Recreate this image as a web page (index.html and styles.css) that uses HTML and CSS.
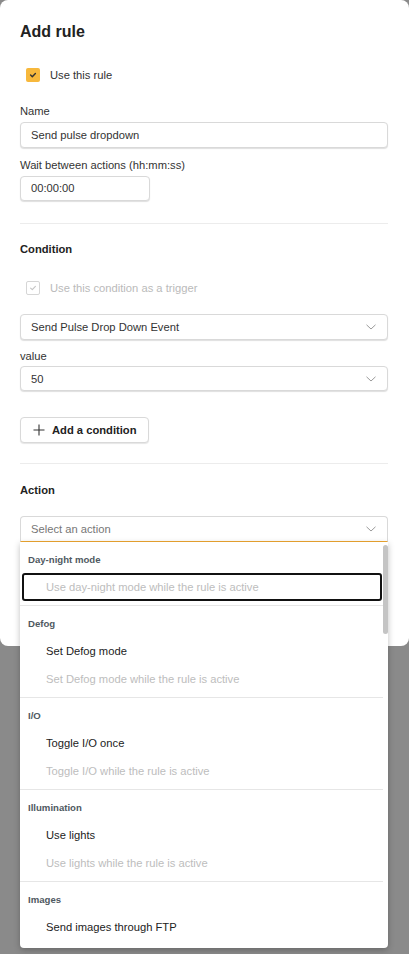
FILE: index.html
```html
<!DOCTYPE html>
<html lang="en">
<head>
<meta charset="utf-8">
<title>Add rule</title>
<link rel="stylesheet" href="styles.css">
</head>
<body>
<div class="dialog">
  <h1 class="title">Add rule</h1>

  <label class="check check-rule">
    <span class="box box-on"><svg viewBox="0 0 14 14" width="14" height="14"><path d="M4.6 7.1 L6.3 8.7 L9.4 5.4" fill="none" stroke="#333" stroke-width="1.4" stroke-linecap="round" stroke-linejoin="round"/></svg></span>
    <span class="check-label">Use this rule</span>
  </label>

  <div class="field field-name">
    <div class="label">Name</div>
    <div class="input">Send pulse dropdown</div>
  </div>
  <div class="field field-wait">
    <div class="label">Wait between actions (hh:mm:ss)</div>
    <div class="input input-short">00:00:00</div>
  </div>

  <hr class="divider">

  <h2 class="section section-condition">Condition</h2>

  <label class="check check-disabled">
    <span class="box box-off"><svg viewBox="0 0 14 14" width="14" height="14"><path d="M4.6 7.1 L6.3 8.7 L9.4 5.4" fill="none" stroke="#c4c4c4" stroke-width="1.1" stroke-linecap="round" stroke-linejoin="round"/></svg></span>
    <span class="check-label">Use this condition as a trigger</span>
  </label>

  <div class="select select-event">
    <span>Send Pulse Drop Down Event</span>
    <svg class="chev" viewBox="0 0 10 6" width="10" height="6"><path d="M0.5 0.8 L5 5 L9.5 0.8" fill="none" stroke="#9a9a9a" stroke-width="1"/></svg>
  </div>
  <div class="field field-value">
    <div class="label label-value">value</div>
    <div class="select">
      <span>50</span>
      <svg class="chev" viewBox="0 0 10 6" width="10" height="6"><path d="M0.5 0.8 L5 5 L9.5 0.8" fill="none" stroke="#9a9a9a" stroke-width="1"/></svg>
    </div>
  </div>

  <button class="btn" type="button">
    <svg viewBox="0 0 12 12" width="12" height="12"><path d="M6 0.5 V11.5 M0.5 6 H11.5" stroke="#333" stroke-width="1.1" fill="none"/></svg>
    <span>Add a condition</span>
  </button>

  <hr class="divider divider-action">

  <h2 class="section">Action</h2>

  <div class="combo">
    <div class="select select-open">
      <span class="placeholder">Select an action</span>
      <svg class="chev" viewBox="0 0 10 6" width="10" height="6"><path d="M0.5 0.8 L5 5 L9.5 0.8" fill="none" stroke="#9a9a9a" stroke-width="1"/></svg>
    </div>
    <div class="menu">
      <div class="menu-list">
        <div class="group">
          <div class="group-head">Day-night mode</div>
          <div class="item item-disabled item-focus">Use day-night mode while the rule is active</div>
        </div>
        <div class="group">
          <div class="group-head">Defog</div>
          <div class="item">Set Defog mode</div>
          <div class="item item-disabled">Set Defog mode while the rule is active</div>
        </div>
        <div class="group">
          <div class="group-head">I/O</div>
          <div class="item">Toggle I/O once</div>
          <div class="item item-disabled">Toggle I/O while the rule is active</div>
        </div>
        <div class="group">
          <div class="group-head">Illumination</div>
          <div class="item">Use lights</div>
          <div class="item item-disabled">Use lights while the rule is active</div>
        </div>
        <div class="group">
          <div class="group-head">Images</div>
          <div class="item">Send images through FTP</div>
        </div>
      </div>
      <div class="scroll-track"><div class="scroll-thumb"></div></div>
    </div>
  </div>
</div>
</body>
</html>
```
FILE: styles.css
```css
* { box-sizing: border-box; }
html, body { margin: 0; padding: 0; }
body {
  background: #8a8a8a;
  font-family: "Liberation Sans", Arial, sans-serif;
  font-size: 11.2px;
  color: #333;
  width: 409px;
  height: 954px;
  overflow: hidden;
}
.dialog {
  background: #fff;
  border-radius: 8px;
  height: 646px;
  padding: 22px 21px 0 20px;
  display: flex;
  flex-direction: column;
}
.title {
  margin: 0;
  font-size: 16px;
  font-weight: 700;
  color: #222;
  line-height: 20px;
}
.check {
  display: flex;
  align-items: center;
  gap: 10px;
  margin: 0 0 0 6px;
  height: 14px;
  flex: none;
}
.check-rule { margin-top: 26px; }
.box {
  width: 14px;
  height: 14px;
  border-radius: 2px;
  display: flex;
  flex: none;
}
.box-on { background: #f7b83c; }
.box-off { border: 1px solid #d6d6d6; background: #fff; }
.box-off svg { margin: -1px; }
.check-label { line-height: 14px; color: #333; }
.check-disabled .check-label { color: #bababa; }
.field { display: flex; flex-direction: column; flex: none; }
.field-name { margin-top: 22px; }
.field-wait { margin-top: 10px; }
.field-value { margin-top: 9px; }
.label { line-height: 14px; color: #333; margin-bottom: 4px; }
.label-value { margin-bottom: 3px; }
.input, .select {
  height: 25.6px;
  border: 1px solid #d9d9d9;
  border-radius: 4px;
  box-shadow: 0 1px 1px rgba(0,0,0,0.13);
  padding: 0 10px;
  display: flex;
  align-items: center;
  color: #333;
  background: #fff;
  flex: none;
}
.input-short { width: 130px; }
.select { justify-content: space-between; padding-right: 11px; }
.divider {
  border: 0;
  border-top: 1px solid #ececec;
  margin: 22px 0 0;
  height: 0;
  flex: none;
}
.section {
  margin: 19px 0 0;
  font-size: 11.2px;
  font-weight: 700;
  color: #222;
  line-height: 14px;
  flex: none;
}
.section-condition { margin-top: 18px; }
.check-disabled { margin-top: 25px; }
.select-event { margin-top: 19px; }
.btn {
  align-self: flex-start;
  margin-top: 26px;
  height: 25.6px;
  width: 129px;
  border: 1px solid #d9d9d9;
  border-radius: 4px;
  background: #fff;
  box-shadow: 0 1px 1px rgba(0,0,0,0.1);
  display: flex;
  align-items: center;
  gap: 7px;
  padding: 0 0 0 12px;
  font-family: inherit;
  font-size: 11.2px;
  font-weight: 700;
  color: #222;
  flex: none;
}
.divider-action { margin-top: 20px; }
.combo { position: relative; margin-top: 19px; flex: none; }
.select-open {
  border-bottom: 1px solid #f0a830;
  border-radius: 4px 4px 0 0;
  box-shadow: none;
}
.placeholder { color: #767676; }
.menu {
  position: absolute;
  left: 0;
  right: 0;
  top: 25.6px;
  height: 406px;
  background: #fff;
  border-radius: 0 0 4px 4px;
  box-shadow: 0 2px 6px rgba(0,0,0,0.25);
  display: flex;
  overflow: hidden;
}
.menu-list { flex: 1; display: flex; flex-direction: column; }
.group {
  padding: 4px 0;
  border-bottom: 1px solid #e6e6e6;
}
.group:last-child { border-bottom: 0; }
.group-head {
  height: 27px;
  display: flex;
  align-items: center;
  padding-left: 8px;
  font-size: 9.6px;
  font-weight: 700;
  color: #4f5961;
}
.item {
  height: 28px;
  display: flex;
  align-items: center;
  padding-left: 26px;
  color: #222;
}
.item-disabled { color: #bdbdbd; }
.item-focus {
  border: 2px solid #111;
  border-radius: 3px;
  margin: 0 1px 0 2px;
  padding-left: 22px;
}
.scroll-track { width: 5px; padding-top: 3px; }
.scroll-thumb {
  width: 5px;
  height: 89px;
  border-radius: 3px;
  background: #c4c4c4;
}
```
